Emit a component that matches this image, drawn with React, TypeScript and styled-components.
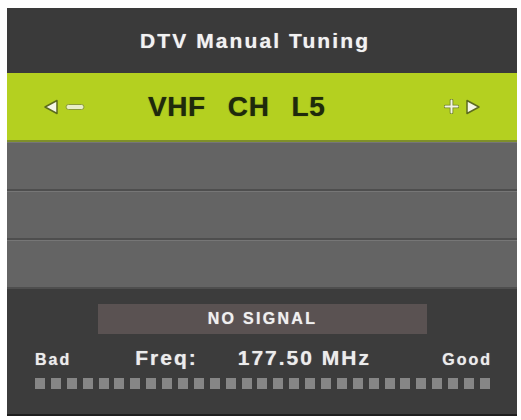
import React from "react";
import styled, { createGlobalStyle } from "styled-components";

const GlobalStyle = createGlobalStyle`
  html, body {
    margin: 0;
    padding: 0;
    background: #ffffff;
  }
  body {
    font-family: "Liberation Sans", Arial, sans-serif;
  }
`;

const Screen = styled.div`
  padding: 8px 0 0 7px;
`;

const Panel = styled.div`
  width: 510px;
  height: 408px;
  display: flex;
  flex-direction: column;
  background: #3c3c3c;
  border-bottom: 2px solid #1e1e1e;
  box-sizing: border-box;
`;

const TitleBar = styled.div`
  height: 65px;
  display: flex;
  align-items: center;
  justify-content: center;
  padding-right: 14px;
  background: #3a3a3a;
  color: #f2f2f2;
  font-weight: bold;
  font-size: 21px;
  letter-spacing: 2.1px;
  text-shadow: 0 0 1px rgba(255, 255, 255, 0.6);
`;

const ChannelBar = styled.div`
  height: 69px;
  display: flex;
  align-items: center;
  padding: 0 36px 0 36px;
  background: #b4d020;
  border-bottom: 2px solid #7f8f2a;
  box-sizing: border-box;
`;

const Stepper = styled.div`
  display: flex;
  align-items: center;
  gap: 6px;
`;

const ChannelName = styled.div`
  display: flex;
  gap: 22px;
  margin-left: 63px;
  color: #1f2a0c;
  font-weight: bold;
  font-size: 28px;
  letter-spacing: 0.6px;
  text-shadow: 0 0 1px rgba(31, 42, 12, 0.7);
`;

const Spacer = styled.div`
  flex: 1;
`;

const EmptyRow = styled.div`
  height: 49px;
  background: #646464;
  border-top: 1px solid #767676;
  border-bottom: 2px solid #4e4e4e;
  box-sizing: border-box;
`;

const SignalArea = styled.div`
  flex: 1;
  display: flex;
  flex-direction: column;
  padding: 15px 25px 0 28px;
  background: #3c3c3c;
`;

const StatusBox = styled.div`
  width: 329px;
  height: 30px;
  margin-left: 63px;
  display: flex;
  align-items: center;
  justify-content: center;
  background: #5a5252;
  color: #f0f0f0;
  font-weight: bold;
  font-size: 16px;
  letter-spacing: 2.3px;
  text-shadow: 0 0 1px rgba(255, 255, 255, 0.6);
`;

const ReadoutRow = styled.div`
  display: flex;
  align-items: baseline;
  margin-top: 12px;
  color: #ececec;
  font-weight: bold;
  text-shadow: 0 0 1px rgba(255, 255, 255, 0.6);
`;

const EndLabel = styled.span<{ $right?: boolean }>`
  font-size: 16px;
  letter-spacing: 2px;
  margin-left: ${(p) => (p.$right ? "auto" : "0")};
`;

const FreqText = styled.span<{ $gap: number }>`
  font-size: 21px;
  letter-spacing: 2px;
  margin-left: ${(p) => p.$gap}px;
`;

const Meter = styled.div`
  display: flex;
  justify-content: space-between;
  width: 455px;
  margin-top: 8px;
`;

const Cell = styled.div`
  width: 10px;
  height: 11px;
  background: #868686;
`;

const ArrowIcon = ({ dir }: { dir: "left" | "right" }) => (
  <svg width="16" height="16" viewBox="0 0 16 16">
    <polygon
      points={dir === "left" ? "14,1.5 14,14.5 2,8" : "2,1.5 2,14.5 14,8"}
      fill="#f4f6e8"
      stroke="#5c6b1e"
      strokeWidth="1.5"
      strokeLinejoin="round"
    />
  </svg>
);

const MinusIcon = () => (
  <svg width="20" height="8" viewBox="0 0 20 8">
    <rect x="1" y="1.5" width="18" height="5" rx="2.5" fill="#e8eec8" stroke="#8a9a3a" strokeWidth="1" />
  </svg>
);

const PlusIcon = () => (
  <svg width="15" height="15" viewBox="0 0 15 15">
    <path d="M7.5 1.5v12M1.5 7.5h12" stroke="#6f7f2a" strokeWidth="3.6" strokeLinecap="round" />
    <path d="M7.5 1.5v12M1.5 7.5h12" stroke="#f3f5e4" strokeWidth="2" strokeLinecap="round" />
  </svg>
);

const App: React.FC = () => (
  <>
    <GlobalStyle />
    <Screen>
      <Panel>
        <TitleBar>DTV Manual Tuning</TitleBar>
        <ChannelBar>
          <Stepper>
            <ArrowIcon dir="left" />
            <MinusIcon />
          </Stepper>
          <ChannelName>
            <span>VHF</span>
            <span>CH</span>
            <span>L5</span>
          </ChannelName>
          <Spacer />
          <Stepper>
            <PlusIcon />
            <ArrowIcon dir="right" />
          </Stepper>
        </ChannelBar>
        <EmptyRow />
        <EmptyRow />
        <EmptyRow />
        <SignalArea>
          <StatusBox>NO SIGNAL</StatusBox>
          <ReadoutRow>
            <EndLabel>Bad</EndLabel>
            <FreqText $gap={64}>Freq:</FreqText>
            <FreqText $gap={40}>177.50 MHz</FreqText>
            <EndLabel $right>Good</EndLabel>
          </ReadoutRow>
          <Meter>
            {Array.from({ length: 29 }, (_, i) => (
              <Cell key={i} />
            ))}
          </Meter>
        </SignalArea>
      </Panel>
    </Screen>
  </>
);

export default App;
